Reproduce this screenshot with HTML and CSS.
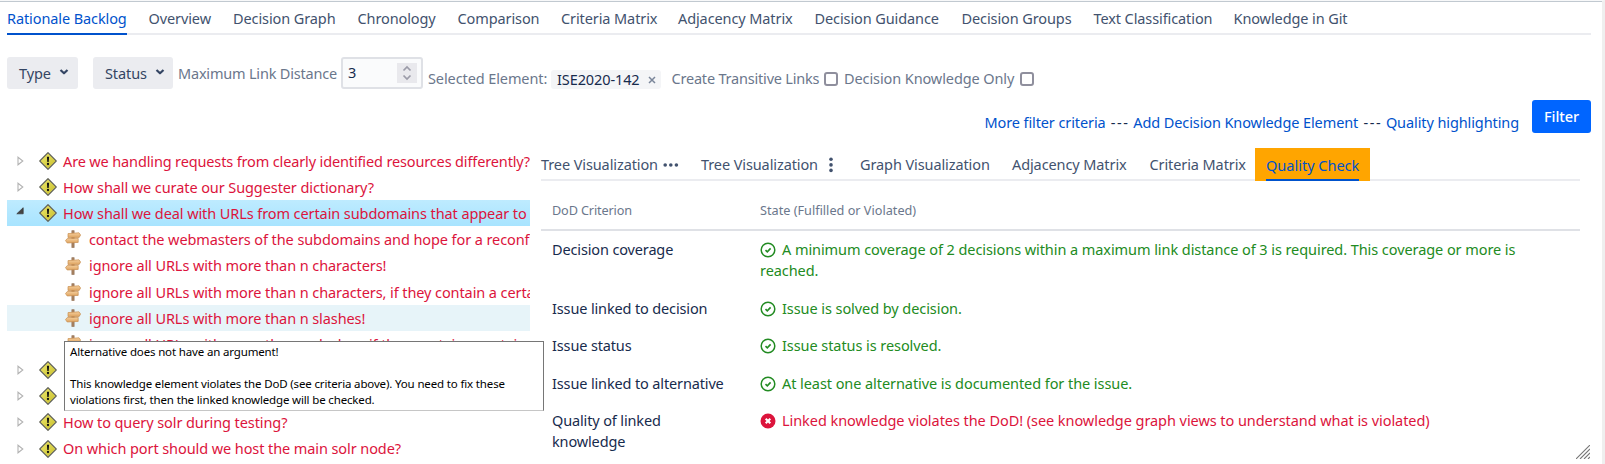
FILE: index.html
```
<!DOCTYPE html>
<html lang="en">
<head>
<meta charset="utf-8">
<title>Rationale Backlog</title>
<link rel="stylesheet" href="styles.css">
</head>
<body>
<svg class="defs" aria-hidden="true">
  <defs>
    <linearGradient id="sign" x1="0" y1="0" x2="1" y2="1">
      <stop offset="0" stop-color="#ece76a"/><stop offset="1" stop-color="#c9bf2c"/>
    </linearGradient>
    <linearGradient id="wood" x1="0" y1="0" x2="0" y2="1">
      <stop offset="0" stop-color="#f6cf9c"/><stop offset="1" stop-color="#dda25f"/>
    </linearGradient>
    <symbol id="issue" viewBox="0 0 18 18">
      <path d="M9 .8 17.2 9 9 17.2 .8 9Z" fill="#d9d25a" stroke="#66675c" stroke-width="1.3" stroke-linejoin="round"/>
      <path d="M9 1.9 16.1 9 9 16.1 1.9 9Z" fill="url(#sign)"/>
      <path d="M7.9 4.8h2.2L9.7 10H8.3Z" fill="#111"/>
      <circle cx="9" cy="12" r="1.15" fill="#111"/>
    </symbol>
    <symbol id="alternative" viewBox="0 0 16 18">
      <path d="M6.8.6h2.4v17H6.8Z" fill="#a98362" stroke="#86664c" stroke-width=".5"/>
      <path d="M3 3.6 14 2.8 15.6 5 14.2 7.4 3 7.6Z" fill="url(#wood)" stroke="#c98f52" stroke-width=".7"/>
      <path d="M.5 10.6 2.2 8.6 13.2 8.4V12.4L2.2 13Z" fill="url(#wood)" stroke="#c98f52" stroke-width=".7"/>
    </symbol>
    <symbol id="closed" viewBox="0 0 7 10">
      <path d="M1 1.2 5.8 5 1 8.8Z" fill="#fff" stroke="#b3b3b3" stroke-width="1.1"/>
    </symbol>
    <symbol id="open" viewBox="0 0 8 8">
      <path d="M7.2.7V6.8H.8Z" fill="#444" stroke="#333" stroke-width=".7"/>
    </symbol>
    <symbol id="chevron" viewBox="0 0 10 8">
      <path d="M1.5 2 5 5.3 8.5 2" fill="none" stroke="#344563" stroke-width="2.2" stroke-linejoin="round"/>
    </symbol>
    <symbol id="ok" viewBox="0 0 16 16">
      <circle cx="8" cy="8" r="6.8" fill="none" stroke="#228b22" stroke-width="1.5"/>
      <path d="M5.5 8.1 7.3 9.8 10.6 6.4" fill="none" stroke="#228b22" stroke-width="1.6"/>
    </symbol>
    <symbol id="bad" viewBox="0 0 16 16">
      <circle cx="8" cy="8" r="7.5" fill="#dc143c"/>
      <path d="M5.7 5.7 10.3 10.3M10.3 5.7 5.7 10.3" stroke="#fff" stroke-width="2.1"/>
    </symbol>
  </defs>
</svg>

<div class="page">
  <nav class="tabs main-tabs">
    <a class="tab active">Rationale Backlog</a><a class="tab">Overview</a><a class="tab">Decision Graph</a><a class="tab">Chronology</a><a class="tab">Comparison</a><a class="tab">Criteria Matrix</a><a class="tab">Adjacency Matrix</a><a class="tab">Decision Guidance</a><a class="tab">Decision Groups</a><a class="tab">Text Classification</a><a class="tab">Knowledge in Git</a>
  </nav>

  <div class="filters">
    <button class="dropdown type">Type <svg><use href="#chevron"/></svg></button>
    <button class="dropdown status">Status <svg><use href="#chevron"/></svg></button>
    <label class="distance">Maximum Link Distance</label>
    <div class="number"><span>3</span>
      <svg class="spin" viewBox="0 0 20 20"><path d="M6.5 7.5 10 4 13.5 7.5M6.5 12.5 10 16 13.5 12.5" fill="none" stroke="#9b9ba8" stroke-width="1.7"/></svg>
    </div>
    <label class="low selected">Selected Element:</label>
    <span class="tag">ISE2020-142<svg viewBox="0 0 8 8"><path d="M1 1 7 7M7 1 1 7" stroke="#7a869a" stroke-width="1.5"/></svg></span>
    <label class="low transitive">Create Transitive Links</label><i class="check"></i>
    <label class="low only">Decision Knowledge Only</label><i class="check"></i>
  </div>

  <div class="actions">
    <p class="links"><a>More filter criteria</a> <span class="dash">---</span> <a>Add Decision Knowledge Element</a> <span class="dash">---</span> <a>Quality highlighting</a></p>
    <button class="primary">Filter</button>
  </div>

  <div class="content">
    <ul class="tree">
      <li class="row long"><svg class="arrow"><use href="#closed"/></svg><svg class="icon"><use href="#issue"/></svg><span>Are we handling requests from clearly identified resources differently?</span></li>
      <li class="row"><svg class="arrow"><use href="#closed"/></svg><svg class="icon"><use href="#issue"/></svg><span>How shall we curate our Suggester dictionary?</span></li>
      <li class="row current"><svg class="arrow expanded"><use href="#open"/></svg><svg class="icon"><use href="#issue"/></svg><span>How shall we deal with URLs from certain subdomains that appear to</span></li>
      <li class="row child"><svg class="icon"><use href="#alternative"/></svg><span>contact the webmasters of the subdomains and hope for a reconf</span></li>
      <li class="row child"><svg class="icon"><use href="#alternative"/></svg><span>ignore all URLs with more than n characters!</span></li>
      <li class="row child"><svg class="icon"><use href="#alternative"/></svg><span>ignore all URLs with more than n characters, if they contain a certa</span></li>
      <li class="row child hover"><svg class="icon"><use href="#alternative"/></svg><span>ignore all URLs with more than n slashes!</span></li>
      <li class="row child"><svg class="icon"><use href="#alternative"/></svg><span>ignore all URLs with more than n slashes, if they contain a certain</span></li>
      <li class="row"><svg class="arrow"><use href="#closed"/></svg><svg class="icon"><use href="#issue"/></svg></li>
      <li class="row"><svg class="arrow"><use href="#closed"/></svg><svg class="icon"><use href="#issue"/></svg></li>
      <li class="row"><svg class="arrow"><use href="#closed"/></svg><svg class="icon"><use href="#issue"/></svg><span>How to query solr during testing?</span></li>
      <li class="row"><svg class="arrow"><use href="#closed"/></svg><svg class="icon"><use href="#issue"/></svg><span>On which port should we host the main solr node?</span></li>
    </ul>

    <section class="detail">
      <nav class="tabs view-tabs">
        <a class="tab">Tree Visualization<svg class="dots-h" viewBox="0 0 16 4"><circle cx="2.2" cy="2" r="1.8"/><circle cx="7.8" cy="2" r="1.8"/><circle cx="13.4" cy="2" r="1.8"/></svg></a>
        <a class="tab">Tree Visualization<svg class="dots-v" viewBox="0 0 4 16"><circle cx="2" cy="2.2" r="1.8"/><circle cx="2" cy="7.9" r="1.8"/><circle cx="2" cy="13.4" r="1.8"/></svg></a>
        <a class="tab">Graph Visualization</a>
        <a class="tab">Adjacency Matrix</a>
        <a class="tab">Criteria Matrix</a>
        <a class="tab quality"><span>Quality Check</span></a>
      </nav>
      <div class="criteria">
        <div class="line head"><div>DoD Criterion</div><div>State (Fulfilled or Violated)</div></div>
        <div class="line"><div>Decision coverage</div><div class="good"><svg><use href="#ok"/></svg>A minimum coverage of 2 decisions within a maximum link distance of 3 is required. This coverage or more is reached.</div></div>
        <div class="line"><div>Issue linked to decision</div><div class="good"><svg><use href="#ok"/></svg>Issue is solved by decision.</div></div>
        <div class="line"><div>Issue status</div><div class="good"><svg><use href="#ok"/></svg>Issue status is resolved.</div></div>
        <div class="line"><div>Issue linked to alternative</div><div class="good"><svg><use href="#ok"/></svg>At least one alternative is documented for the issue.</div></div>
        <div class="line"><div>Quality of linked knowledge</div><div class="violated"><svg><use href="#bad"/></svg>Linked knowledge violates the DoD! (see knowledge graph views to understand what is violated)</div></div>
      </div>
      <svg class="grip" viewBox="0 0 14 14"><path d="M0 14 14 0M4 14 14 4M8 14 14 8M12 14 14 12" stroke="#777" stroke-width="1.1"/></svg>
    </section>
  </div>

  <div class="tooltip">Alternative does not have an argument!<br><br>This knowledge element violates the DoD (see criteria above). You need to fix these<br>violations first, then the linked knowledge will be checked.</div>
</div>
</body>
</html>
```
FILE: styles.css
```
* { box-sizing: border-box; }
body {
  margin: 0;
  background: #fff;
  color: #172b4d;
  font: 14.5px/21.4px "Noto Sans", "Open Sans", sans-serif;
  letter-spacing: -0.1px;
}
.defs { position: absolute; width: 0; height: 0; }
.page {
  position: relative;
  width: 1605px;
  height: 464px;
  overflow: hidden;
  padding: 0 11px 0 7px;
  border-top: 1px solid #f7f8f9;
  border-right: 3px solid #efefef;
  box-shadow: inset 0 1px #c1c9d0;
}

/* Tab bars */
.tabs {
  display: grid;
  box-shadow: inset 0 -2px #ebecf0;
  color: #42526e;
  white-space: nowrap;
}
.tab { display: flex; align-items: center; }
.main-tabs {
  height: 34px;
  grid-template-columns: 141.5px 84.5px 124.5px 100px 103.5px 117px 136.5px 147px 132px 140px auto;
}
.main-tabs .tab { padding-top: 1px; }
.active {
  justify-self: start;
  width: 120px;
  color: #0052cc;
  box-shadow: inset 0 -2px #0052cc;
}

/* Filter controls */
.filters { display: flex; height: 33px; margin-top: 22px; color: #6b778c; white-space: nowrap; }
button { border: 0; font: inherit; letter-spacing: inherit; padding: 0; }
.dropdown {
  display: flex;
  align-items: center;
  gap: 8px;
  height: 32px;
  padding: 1px 0 0 12px;
  border-radius: 3px;
  background: #ebecf0;
  color: #344563;
}
.dropdown svg { width: 10px; height: 8px; margin-top: -3px; }
.type { width: 71px; }
.status { width: 80px; margin-left: 15px; }
.distance { width: 168px; padding: 6px 0 0 5px; letter-spacing: -0.2px; }
.number {
  display: flex;
  align-items: center;
  justify-content: space-between;
  width: 82px;
  height: 32px;
  padding: 0 4px 0 5px;
  border: 2px solid #dfe1e6;
  border-radius: 3px;
  background: #fafbfc;
  color: #172b4d;
}
.spin { width: 20px; height: 20px; background: #e9e9ed; }
.low { padding-top: 11px; }
.selected { width: 128px; padding-left: 5px; }
.tag {
  display: flex;
  align-items: center;
  gap: 8px;
  width: 110px;
  height: 19px;
  margin-top: 13px;
  padding: 1px 0 0 6px;
  border-radius: 3px;
  background: #f4f5f7;
  color: #172b4d;
}
.tag svg { width: 8px; height: 8px; margin-top: -1px; }
.transitive { width: 163px; padding-left: 10.5px; letter-spacing: -0.2px; }
.only { width: 182px; padding-left: 6px; }
.check {
  width: 14px;
  height: 14px;
  margin-top: 15px;
  border: 2px solid #8f8f9d;
  border-radius: 3px;
}

/* Links and submit */
.actions { display: flex; justify-content: flex-end; height: 48px; padding-top: 10px; gap: 13px; }
.links { margin: 12px 0 0; }
.links a { color: #0052cc; }
.dash { letter-spacing: 1.6px; margin-left: 1.5px; }
.primary {
  width: 59px;
  height: 33px;
  border-radius: 3px;
  background: #0065ff;
  color: #fff;
  font-weight: 500;
}

/* Knowledge tree */
.content { display: flex; margin-top: 10px; }
.tree {
  width: 523px;
  height: 316px;
  margin: 0;
  padding: 0;
  overflow: hidden;
  list-style: none;
  color: #dc143c;
  letter-spacing: -0.09px;
}
.row { display: flex; align-items: center; height: 26.15px; padding-left: 10px; white-space: nowrap; }
.row span { padding-top: 1px; }
.long { letter-spacing: -0.14px; }
.arrow { width: 7px; height: 10px; margin-right: 15px; flex: none; }
.expanded { width: 8px; height: 8px; margin: -5px 15px 0 -1px; }
.icon { width: 18px; height: 18px; margin-right: 6px; flex: none; }
.child { padding-left: 57px; }
.child .icon { margin-right: 7px; }
.current { background: linear-gradient(#beebff, #a8e4ff); }
.hover { background: #e7f4f9; }

/* Detail panel */
.detail { position: relative; width: 1050px; margin-left: 11px; }
.view-tabs { height: 33px; width: 1039px; grid-template-columns: 160px 159px 152px 137.5px 105.5px 115px; }
.view-tabs .tab { padding-top: 1px; }
.dots-h { width: 16px; height: 4px; margin-left: 5px; fill: #42526e; }
.dots-v { width: 4px; height: 16px; margin-left: 11px; fill: #42526e; }
.quality { padding: 0 11px; background: #ffa500; color: #0052cc; }
.view-tabs .quality { padding-top: 0; }
.quality span { height: 33px; padding-top: 6.5px; width: 93px; letter-spacing: 0; box-shadow: inset 0 -2px #0052cc; }
.criteria { width: 1039px; }
.line { display: grid; grid-template-columns: 208px 1fr; padding: 8px 11px; }
.line > div:first-child { max-width: 180px; letter-spacing: -0.14px; }
.line:last-child > div:first-child { max-width: 140px; }
.head {
  height: 50px;
  padding-top: 19px;
  border-bottom: 2px solid #dfe1e6;
  color: #6b778c;
  font-size: 12.7px;
  letter-spacing: 0;
}
.good { color: #228b22; letter-spacing: -0.07px; }
.violated { color: #dc143c; letter-spacing: -0.06px; }
.good svg, .violated svg { width: 16px; height: 16px; margin: -3px 6px -3px 0; vertical-align: 0; }
.grip { position: absolute; right: 1px; bottom: 5px; width: 14px; height: 14px; }

/* Hover tooltip over the tree */
.tooltip {
  position: absolute;
  left: 64px;
  top: 340px;
  width: 480px;
  height: 70px;
  padding: 2px 5px;
  border: 1px solid #767676;
  border-bottom-color: #c6c6c6;
  background: #fff;
  color: #000;
  font-size: 11.5px;
  line-height: 16px;
  letter-spacing: -0.15px;
  white-space: nowrap;
}
```
